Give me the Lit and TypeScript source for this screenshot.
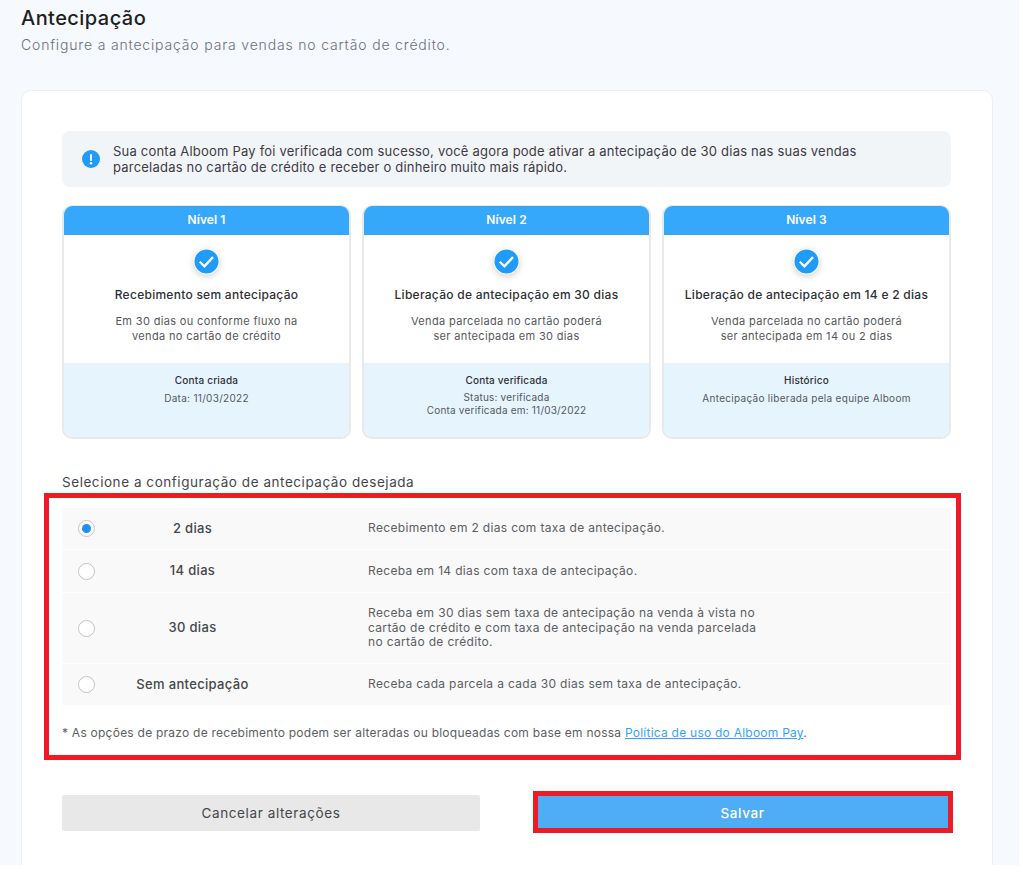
import { LitElement, html, css } from "lit";
import { customElement } from "lit/decorators.js";

const levels = [
  { n: "Nível 1", t: "Recebimento sem antecipação", d: ["Em 30 dias ou conforme fluxo na", "venda no cartão de crédito"], ft: "Conta criada", f: ["Data: 11/03/2022"] },
  { n: "Nível 2", t: "Liberação de antecipação em 30 dias", d: ["Venda parcelada no cartão poderá", "ser antecipada em 30 dias"], ft: "Conta verificada", f: ["Status: verificada", "Conta verificada em: 11/03/2022"] },
  { n: "Nível 3", t: "Liberação de antecipação em 14 e 2 dias", d: ["Venda parcelada no cartão poderá", "ser antecipada em 14 ou 2 dias"], ft: "Histórico", f: ["Antecipação liberada pela equipe Alboom"] },
];

const options = [
  { l: "2 dias", d: ["Recebimento em 2 dias com taxa de antecipação."], on: true, h: "r41" },
  { l: "14 dias", d: ["Receba em 14 dias com taxa de antecipação."], on: false, h: "r42" },
  { l: "30 dias", d: ["Receba em 30 dias sem taxa de antecipação na venda à vista no", "cartão de crédito e com taxa de antecipação na venda parcelada", "no cartão de crédito."], on: false, h: "r70" },
  { l: "Sem antecipação", d: ["Receba cada parcela a cada 30 dias sem taxa de antecipação."], on: false, h: "r41" },
];

@customElement("app-root")
export class AppRoot extends LitElement {
  static styles = css`
    :host { display: block; width: 1023px; height: 875px; background: #fff; font-family: Inter, "Open Sans", sans-serif; color: #44474c; overflow: hidden; }
    * { box-sizing: border-box; }
    .page { position: relative; width: 1019px; height: 865px; background: #f6f9fe; padding: 6px 0 0 21px; overflow: hidden; }
    h1 { margin: 0; font-size: 20px; line-height: 24px; font-weight: 500; color: #1d1f23; letter-spacing: 0.45px; }
    .sub { margin: 5px 0 0; font-size: 14px; line-height: 20px; color: #6c7077; font-weight: 300; letter-spacing: 0.83px; }
    .card { margin-top: 35px; width: 972px; height: 820px; background: #fff; border: 1px solid #eceef1; border-radius: 10px; padding: 40px 40px 0; }
    .alert { width: 889px; height: 56px; background: #f1f5f8; border-radius: 8px; display: flex; align-items: center; padding-left: 20px; gap: 13px; font-size: 13px; line-height: 16px; color: #3e3a45; letter-spacing: 0.21px; }
    .alert svg { flex: none; display: block; }
    .levels { display: grid; grid-template-columns: repeat(3, 289px); gap: 11px; margin-top: 18px; }
    .level { height: 234px; border: 2px solid #e9e9e9; border-top-width: 1px; border-radius: 10px; overflow: hidden; display: flex; flex-direction: column; text-align: center; }
    .lh { height: 29px; background: #36a8fb; color: #fff; font-size: 12px; line-height: 27px; font-weight: 600; margin: 0 -2px; letter-spacing: 0.1px; }
    .lb { height: 128px; padding-top: 14px; }
    .chk { display: block; margin: 0 auto; width: 27px; height: 27px; margin-top: -1px; filter: drop-shadow(0 2px 3px rgba(0,0,0,.18)); }
    .lt { margin-top: 12px; font-size: 12px; line-height: 16px; font-weight: 500; color: #2e3035; letter-spacing: 0.27px; }
    .ld { margin-top: 11px; font-size: 11px; line-height: 15px; color: #55585e; letter-spacing: 0.35px; }
    .lf { flex: 1; background: #e6f4fe; padding-top: 10px; font-size: 10px; color: #55585e; letter-spacing: 0.2px; }
    .lft { line-height: 14px; font-weight: 500; color: #2e3035; }
    .lfd { margin-top: 4px; line-height: 13px; }
    .lfd.one { margin-top: 5px; letter-spacing: 0.3px; }
    .sel { margin: 34px 0 0; font-size: 13.5px; line-height: 18px; color: #44474c; font-weight: 400; letter-spacing: 0.55px; }
    .rows { margin-top: 17px; width: 889px; display: flex; flex-direction: column; gap: 1px; }
    .row { display: grid; grid-template-columns: 48px 165px 1fr; align-items: center; background: #f9f9f9; }
    .r41 { height: 41px; } .r42 { height: 42px; } .r70 { height: 70px; }
    .radio { justify-self: center; width: 17px; height: 17px; border: 1px solid #c4c4c4; border-radius: 50%; background: #fff; display: grid; place-items: center; }
    .dot { width: 9px; height: 9px; border-radius: 50%; background: #1e90f5; }
    .rl { text-align: center; font-size: 13px; font-weight: 500; color: #44474c; line-height: 16px; letter-spacing: 0.33px; margin-top: -2px; }
    .rd { padding-left: 93px; font-size: 12px; line-height: 14.5px; color: #5b5e63; white-space: nowrap; letter-spacing: 0.33px; }
    .note { margin: 20px 0 0; font-size: 12px; line-height: 16px; color: #5b5e63; letter-spacing: 0.24px; white-space: nowrap; }
    .note a { color: #36a3f7; text-decoration: underline; }
    .actions { margin-top: 54px; width: 889px; display: flex; justify-content: space-between; }
    .btn { height: 36px; border: 0; border-radius: 2px; font: inherit; font-size: 13.5px; display: grid; place-items: center; letter-spacing: 0.6px; padding: 0; }
    .cancel { width: 418px; background: #e8e8e8; color: #44474c; }
    .save { width: 417px; background: #4fadf5; color: #fff; font-weight: 500; }
    .mark { position: absolute; border: 5px solid #ed1c24; pointer-events: none; }
    .m1 { left: 44px; top: 493px; width: 917px; height: 267px; }
    .m2 { left: 533px; top: 791px; width: 420px; height: 42px; }
  `;

  render() {
    return html`<div class="page">
      <h1>Antecipação</h1>
      <p class="sub">Configure a antecipação para vendas no cartão de crédito.</p>
      <div class="card">
        <div class="alert">
          <svg width="18" height="18" viewBox="0 0 18 18"><circle cx="9" cy="9" r="9" fill="#1f9bfa"/><rect x="8" y="4" width="2" height="7" rx="1" fill="#fff"/><circle cx="9" cy="13.2" r="1.2" fill="#fff"/></svg>
          <div>Sua conta Alboom Pay foi verificada com sucesso, você agora pode ativar a antecipação de 30 dias nas suas vendas<br>parceladas no cartão de crédito e receber o dinheiro muito mais rápido.</div>
        </div>
        <div class="levels">
          ${levels.map((l) => html`<div class="level">
            <div class="lh">${l.n}</div>
            <div class="lb">
              <svg class="chk" viewBox="0 0 27 27"><circle cx="13.5" cy="13.5" r="13" fill="#fff"/><circle cx="13.5" cy="13.5" r="12" fill="#1f9bfa"/><path d="M6.8 13.8l4.6 4.5 8.6-9.2" fill="none" stroke="#fff" stroke-width="2.3"/></svg>
              <div class="lt">${l.t}</div>
              <div class="ld">${l.d[0]}<br>${l.d[1]}</div>
            </div>
            <div class="lf">
              <div class="lft">${l.ft}</div>
              <div class="lfd ${l.f.length === 1 ? "one" : ""}">${l.f.map((x, i) => html`${i ? html`<br>` : ""}${x}`)}</div>
            </div>
          </div>`)}
        </div>
        <h2 class="sel">Selecione a configuração de antecipação desejada</h2>
        <div class="rows">
          ${options.map((o) => html`<div class="row ${o.h}">
            <span class="radio">${o.on ? html`<span class="dot"></span>` : ""}</span>
            <div class="rl">${o.l}</div>
            <div class="rd">${o.d.map((x, i) => html`${i ? html`<br>` : ""}${x}`)}</div>
          </div>`)}
        </div>
        <p class="note">* As opções de prazo de recebimento podem ser alteradas ou bloqueadas com base em nossa <a href="#">Política de uso do Alboom Pay</a>.</p>
        <div class="actions">
          <button class="btn cancel">Cancelar alterações</button>
          <button class="btn save">Salvar</button>
        </div>
      </div>
      <div class="mark m1"></div>
      <div class="mark m2"></div>
    </div>`;
  }
}
